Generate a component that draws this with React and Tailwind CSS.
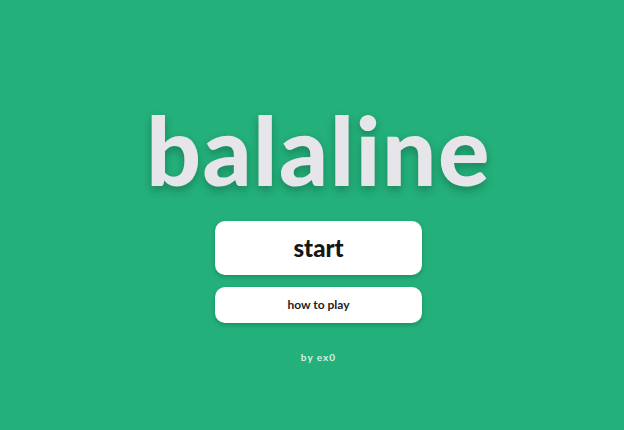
export default function App() {
  return (
    <div className="w-[624px] h-[430px] bg-[#23b07a] pl-[13px] flex flex-col items-center font-['Lato',sans-serif]">
      <h1 className="mt-[98px] h-[102px] text-[96px] leading-[102px] font-black tracking-[1.5px] text-[#e6e6ea] [text-shadow:0_4px_8px_rgba(0,0,0,0.25)]">
        balaline
      </h1>
      <div className="mt-[21px] flex flex-col gap-3 w-[207px]">
        <button className="h-[54px] rounded-[10px] bg-white text-[#161616] text-[24px] font-black shadow-[0_2px_4px_rgba(0,0,0,0.2)]">
          start
        </button>
        <button className="h-[36px] rounded-[10px] bg-white text-[#222] text-[12px] font-bold shadow-[0_2px_4px_rgba(0,0,0,0.2)]">
          how to play
        </button>
      </div>
      <p className="mt-[27px] text-[10px] font-bold tracking-[1px] text-[#d8f0e6]">by ex0</p>
    </div>
  );
}
